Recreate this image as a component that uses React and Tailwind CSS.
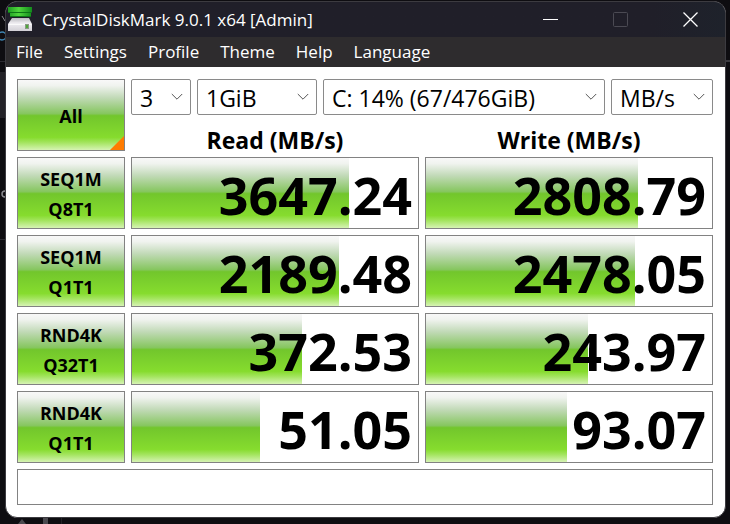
import React from 'react';

const MENUS = ['File', 'Settings', 'Profile', 'Theme', 'Help', 'Language'];

const TESTS = [
    { name: 'SEQ1M', queue: 'Q8T1', read: '3647.24', readFill: 76, write: '2808.79', writeFill: 74 },
    { name: 'SEQ1M', queue: 'Q1T1', read: '2189.48', readFill: 72.5, write: '2478.05', writeFill: 73 },
    { name: 'RND4K', queue: 'Q32T1', read: '372.53', readFill: 59.5, write: '243.97', writeFill: 56.5 },
    { name: 'RND4K', queue: 'Q1T1', read: '51.05', readFill: 44.8, write: '93.07', writeFill: 49.3 },
];

const GREEN =
    'bg-[linear-gradient(to_bottom,#f8f8f8_0%,#f0f3ef_8%,#c2dab8_25%,#86c65f_48%,#72c62c_51%,#86dc2e_82%,#a2e45c_89%,#d6f3b4_100%)]';

function DiskIcon() {
    return (
        <svg width="26" height="26" viewBox="0 0 26 26" aria-hidden="true">
            <defs>
                <linearGradient id="disk" x1="0" y1="0" x2="0" y2="1">
                    <stop offset="0" stopColor="#b9b9be" />
                    <stop offset="0.4" stopColor="#f0eef2" />
                    <stop offset="1" stopColor="#d2d0d6" />
                </linearGradient>
                <linearGradient id="leaf" x1="0" y1="0" x2="1" y2="0">
                    <stop offset="0" stopColor="#1e9c22" />
                    <stop offset="0.45" stopColor="#4fd63c" />
                    <stop offset="1" stopColor="#128a1c" />
                </linearGradient>
            </defs>
            <path d="M4 11h17l3 6v7H0v-7z" fill="url(#disk)" />
            <path d="M1 17.5h22" stroke="#fafafa" />
            <path d="M0 0h24v5l-1 1v4H2V6l-2-1z" fill="url(#leaf)" />
            <path d="M0 5.5h23M2 9.5h21" stroke="#0c7416" />
            <rect x="17.5" y="17.5" width="3" height="4" fill="#4fa83a" stroke="#8a9a84" />
        </svg>
    );
}

// Bits of the desktop that show round the window
function Desktop() {
    return (
        <svg className="absolute inset-0 h-full w-full" aria-hidden="true" fill="none">
            <path d="M0 61.5h5M0 239.5h5" stroke="#2c2b31" />
            <path d="M0 72h5v46H0z" fill="#242328" />
            <circle cx="2" cy="36" r="4" stroke="#3f86b4" strokeWidth="1.5" />
            <path d="M2 16l3 5" stroke="#8b8b90" />
            <circle cx="5" cy="194" r="3" stroke="#8b8b90" strokeWidth="1.5" />
            <path d="M726 61h4" stroke="#3c3b40" strokeWidth="2" />
            <path d="M22 519l4 5h-8z" fill="#4a494e" />
            <path d="M43 517h5v7h-5z" fill="#4a494e" />
            <path d="M61.5 518v6" stroke="#222126" />
        </svg>
    );
}

function TitleBar() {
    return (
        <header className="flex h-[35px] items-center bg-[#201f29] bg-linear-to-r from-[#201f29] from-90% to-[#1e222b] pl-0.5 text-white">
            <DiskIcon />
            <h1 className="ml-2 flex-1 text-[17px] leading-6 whitespace-nowrap">CrystalDiskMark 9.0.1 x64 [Admin]</h1>
            <div className="flex h-full">
                <button type="button" aria-label="Minimize" className="flex w-[70px] items-center justify-center">
                    <svg width="15" height="15" viewBox="0 0 15 15" fill="none" stroke="#fff"><path d="M0 7.5h15" /></svg>
                </button>
                <button type="button" aria-label="Maximize" disabled className="flex w-[70px] items-center justify-center">
                    <svg width="15" height="15" viewBox="0 0 15 15" fill="none" stroke="#4b4a53"><rect x="0.5" y="0.5" width="14" height="14" rx="1" /></svg>
                </button>
                <button type="button" aria-label="Close" className="flex w-[70px] items-center justify-center">
                    <svg width="15" height="15" viewBox="0 0 15 15" fill="none" stroke="#fff" strokeWidth="1.3"><path d="M0.5 0.5l14 14M14.5 0.5l-14 14" /></svg>
                </button>
            </div>
        </header>
    );
}

function MenuBar() {
    return (
        <nav className="flex h-[30px] items-center gap-[21px] bg-[#2e2c2e] px-2.5 text-white">
            {MENUS.map((menu) => (
                <button key={menu} type="button" className="text-[17px] leading-6">
                    {menu}
                </button>
            ))}
        </nav>
    );
}

function Select({ label, value }) {
    return (
        <div className="relative">
            <select
                aria-label={label}
                defaultValue={value}
                className="h-9 w-full appearance-none rounded-xs border border-[#8a8a8a] bg-white pt-0.5 pl-2 text-[23px] leading-8 text-black"
            >
                <option>{value}</option>
            </select>
            <svg className="pointer-events-none absolute top-3.5 right-2" width="12" height="8" viewBox="0 0 12 8" fill="none" stroke="#555">
                <path d="M0.8 1l5.2 5.2L11.2 1" />
            </svg>
        </div>
    );
}

function TestButton({ children }) {
    return (
        <button
            type="button"
            className={`relative flex h-[72px] flex-col items-center justify-center border border-[#828282] pt-0.5 text-[18px] leading-[30px] font-bold ${GREEN}`}
        >
            {children}
        </button>
    );
}

function Result({ value, fill }) {
    return (
        <div className="grid h-[72px] border border-[#828282] bg-white">
            <div className={`col-start-1 row-start-1 ${GREEN}`} style={{ width: `${fill}%` }} />
            <output className="col-start-1 row-start-1 self-center pt-1 pr-1.5 text-right text-[52px] leading-[62px] font-bold">
                {value}
            </output>
        </div>
    );
}

export default function App() {
    return (
        <div className="relative min-h-screen bg-[#0e0d11] pt-px pr-1 pb-1.5 pl-[5px] font-['Open_Sans','Noto_Sans',sans-serif] text-black">
            <Desktop />
            <div className="relative overflow-hidden rounded-xl border border-[#3c3b40] bg-white">
                <TitleBar />
                <MenuBar />
                <main className="flex flex-col gap-1.5 pt-3 pr-3 pb-3 pl-[11px]">
                    <div className="grid grid-cols-[108px_1fr] gap-1.5">
                        <TestButton>
                            All
                            <svg className="absolute right-0 bottom-0" width="14" height="14" viewBox="0 0 14 14"><path d="M14 0v14H0z" fill="#ff7b00" /></svg>
                        </TestButton>
                        <div className="flex flex-col">
                            <div className="grid grid-cols-[60px_120px_1fr_102px] gap-1.5">
                                <Select label="Test count" value="3" />
                                <Select label="Test size" value="1GiB" />
                                <Select label="Drive" value="C: 14% (67/476GiB)" />
                                <Select label="Unit" value="MB/s" />
                            </div>
                            <div className="grid flex-1 grid-cols-2 items-end gap-1.5 text-center text-[23px] leading-[22px] font-bold">
                                <h2>Read (MB/s)</h2>
                                <h2>Write (MB/s)</h2>
                            </div>
                        </div>
                    </div>
                    {TESTS.map((test) => (
                        <div key={`${test.name} ${test.queue}`} className="grid grid-cols-[108px_1fr_1fr] gap-1.5">
                            <TestButton>
                                <span>{test.name}</span>
                                <span>{test.queue}</span>
                            </TestButton>
                            <Result value={test.read} fill={test.readFill} />
                            <Result value={test.write} fill={test.writeFill} />
                        </div>
                    ))}
                    <input aria-label="Comment" className="h-9 w-full border border-[#828282] px-2 text-[23px]" />
                </main>
            </div>
        </div>
    );
}
